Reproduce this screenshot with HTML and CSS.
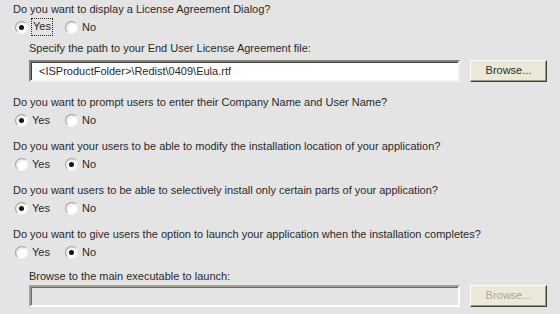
FILE: index.html
```html
<!DOCTYPE html>
<html lang="en">
<head>
  <meta charset="UTF-8">
  <title>Dialogs</title>
  <link rel="stylesheet" href="styles.css">
</head>
<body>
  <div class="panel">
    <div class="group">
      <div class="question">Do you want to display a License Agreement Dialog?</div>
      <div class="options">
        <label class="option"><span class="radio checked"></span><span class="focus">Yes</span></label>
        <label class="option"><span class="radio"></span>No</label>
      </div>
      <div class="sub">
        <div class="sub-label">Specify the path to your End User License Agreement file:</div>
        <div class="field-row">
          <div class="field">&lt;ISProductFolder&gt;\Redist\0409\Eula.rtf</div>
          <div class="button">Browse...</div>
        </div>
      </div>
    </div>

    <div class="group">
      <div class="question">Do you want to prompt users to enter their Company Name and User Name?</div>
      <div class="options">
        <label class="option"><span class="radio checked"></span>Yes</label>
        <label class="option"><span class="radio"></span>No</label>
      </div>
    </div>

    <div class="group">
      <div class="question">Do you want your users to be able to modify the installation location of your application?</div>
      <div class="options">
        <label class="option"><span class="radio"></span>Yes</label>
        <label class="option"><span class="radio checked"></span>No</label>
      </div>
    </div>

    <div class="group">
      <div class="question">Do you want users to be able to selectively install only certain parts of your application?</div>
      <div class="options">
        <label class="option"><span class="radio checked"></span>Yes</label>
        <label class="option"><span class="radio"></span>No</label>
      </div>
    </div>

    <div class="group">
      <div class="question">Do you want to give users the option to launch your application when the installation completes?</div>
      <div class="options">
        <label class="option"><span class="radio"></span>Yes</label>
        <label class="option"><span class="radio checked"></span>No</label>
      </div>
      <div class="sub sub-launch">
        <div class="sub-label">Browse to the main executable to launch:</div>
        <div class="field-row">
          <div class="field disabled"></div>
          <div class="button disabled">Browse...</div>
        </div>
      </div>
    </div>
  </div>
</body>
</html>
```

FILE: styles.css
```css
* {
  margin: 0;
  padding: 0;
  box-sizing: border-box;
}

body {
  font-family: 'Liberation Sans', Arial, sans-serif;
  font-size: 11px;
  background: #e4e4e4;
  color: #2a2a2a;
  width: 560px;
  height: 314px;
  overflow: hidden;
}

.panel {
  padding: 2px 0 0 13px;
}

.group {
  margin-bottom: 10px;
}

.question {
  height: 14px;
  line-height: 14px;
  white-space: nowrap;
}

.options {
  display: flex;
  height: 18px;
  margin-top: 2px;
  align-items: center;
}

.option {
  display: flex;
  align-items: center;
  width: 50px;
  padding-left: 2px;
}

.radio {
  position: relative;
  width: 13px;
  height: 13px;
  border-radius: 50%;
  background: radial-gradient(circle at 65% 65%, #ffffff 40%, #e8e8e0 70%, #c8c8bc 100%);
  border: 1px solid;
  border-color: #a4a49a #f4f4f4 #f4f4f4 #a4a49a;
  margin-right: 4px;
  flex-shrink: 0;
}

.radio.checked::after {
  content: '';
  position: absolute;
  left: 3px;
  top: 3px;
  width: 5px;
  height: 5px;
  border-radius: 50%;
  background: #111;
}

.focus {
  outline: 1px dotted #222;
  padding: 1px 1px 2px;
  line-height: 13px;
}

.sub {
  padding-left: 16px;
  margin-top: 5px;
  margin-bottom: 13px;
}

.sub-label {
  height: 14px;
  line-height: 14px;
}

.field-row {
  display: flex;
  margin-top: 5px;
  gap: 10px;
}

.sub-launch {
  margin-top: 8px;
}

.sub-launch .field-row {
  margin-top: 2px;
}

.field {
  width: 431px;
  height: 22px;
  line-height: 18px;
  padding-left: 8px;
  background: #fff;
  border: 2px solid;
  border-color: #808074 #f0f0f0 #f0f0f0 #808074;
  box-shadow: inset 1px 1px 0 #404040;
  white-space: nowrap;
}

.field.disabled {
  background: #e4e4e4;
  box-shadow: inset 1px 1px 0 #6a6a60;
  border-color: #a0a090 #ffffff #ffffff #a0a090;
}

.button {
  width: 77px;
  height: 22px;
  line-height: 18px;
  text-align: center;
  background: #ece9d8;
  border: 1px solid;
  border-color: #ffffff #404040 #404040 #ffffff;
  box-shadow: inset -1px -1px 0 #9a9888;
}

.button.disabled {
  color: #a8a89a;
}
```
